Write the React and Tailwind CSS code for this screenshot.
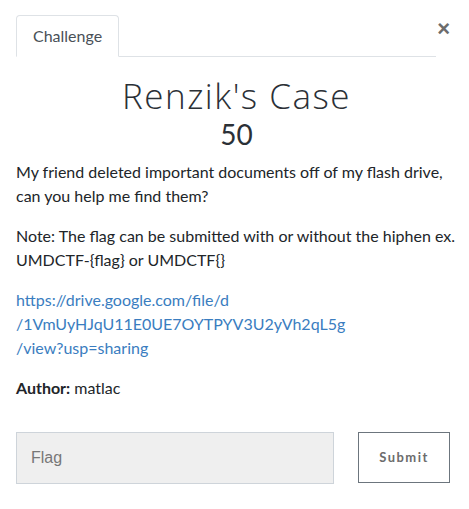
export default function App() {
  return (
    <div className="w-[469px] h-[509px] bg-white relative text-[#212529] font-['Lato',sans-serif]">
      <button className="absolute right-[19px] top-[18px] text-[#6c6c6c] text-[22px] leading-none font-bold font-['Liberation_Sans',sans-serif]">
        ×
      </button>
      <div className="pt-[15px] pl-[16px] pr-[12px]">
        <div className="w-[420px] flex border-b border-[#dee2e6]">
          <div className="-mb-px px-[16px] h-[42px] flex items-center border border-[#dee2e6] border-b-white rounded-t-[4px] text-[16px] text-[#495057]">
            Challenge
          </div>
        </div>
        <h2 className="mt-[18px] text-center text-[35px] leading-[42px] font-light tracking-[1.5px] text-[#2b3036] font-['Open_Sans',sans-serif]">
          Renzik's Case
        </h2>
        <h4 className="text-center text-[28px] leading-[34px] font-normal text-[#2b3036]">50</h4>
        <div className="mt-[9px] text-[16px] leading-[24px] text-[#212529]">
          <p>My friend deleted important documents off of my flash drive, can you help me find them?</p>
          <p className="mt-[16px]">Note: The flag can be submitted with or without the hiphen ex. UMDCTF-&#123;flag&#125; or UMDCTF&#123;&#125;</p>
          <p className="mt-[16px] text-[#3a7dc0]">
            https://drive.google.com/file/d<br />/1VmUyHJqU11E0UE7OYTPYV3U2yVh2qL5g<br />/view?usp=sharing
          </p>
          <p className="mt-[16px]"><b className="font-bold">Author:</b> matlac</p>
        </div>
        <div className="mt-[32px] flex items-start">
          <input
            placeholder="Flag"
            className="w-[318px] h-[52px] bg-[#efefef] border border-[#ced4da] px-[14px] text-[16px] font-['Liberation_Sans',sans-serif] placeholder:text-[#777] outline-none"
          />
          <button className="ml-[24px] w-[92px] h-[51px] border border-[#6c757d] text-[13px] font-bold tracking-[1.5px] text-[#6c6c6c] bg-white">
            Submit
          </button>
        </div>
      </div>
    </div>
  );
}
